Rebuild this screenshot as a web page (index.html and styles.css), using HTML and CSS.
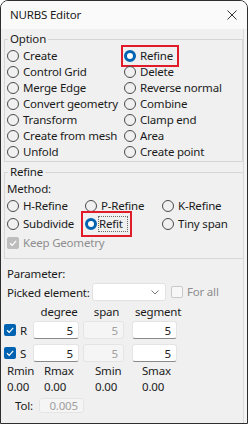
FILE: index.html
```html
<!DOCTYPE html>
<html lang="en">
  <head>
    <meta charset="UTF-8" />
    <meta name="viewport" content="width=device-width, initial-scale=1.0" />
    <title>NURBS Editor</title>
    <link rel="stylesheet" href="styles.css">
  </head>
  <body>
    <div class="window">
      <div class="titlebar">
        <span class="title">NURBS Editor</span>
        <svg class="close" width="10" height="10" viewBox="0 0 10 10">
          <path d="M0.5 0.5 L9.5 9.5 M9.5 0.5 L0.5 9.5" stroke="#333" stroke-width="1" fill="none" />
        </svg>
      </div>

      <div class="content">
        <fieldset class="group option-group">
          <legend>Option</legend>
          <div class="radio-grid">
            <label class="item"><span class="radio"></span>Create</label>
            <label class="item marked"><span class="radio on"></span>Refine</label>
            <label class="item"><span class="radio"></span>Control Grid</label>
            <label class="item"><span class="radio"></span>Delete</label>
            <label class="item"><span class="radio"></span>Merge Edge</label>
            <label class="item"><span class="radio"></span>Reverse normal</label>
            <label class="item"><span class="radio"></span>Convert geometry</label>
            <label class="item"><span class="radio"></span>Combine</label>
            <label class="item"><span class="radio"></span>Transform</label>
            <label class="item"><span class="radio"></span>Clamp end</label>
            <label class="item"><span class="radio"></span>Create from mesh</label>
            <label class="item"><span class="radio"></span>Area</label>
            <label class="item"><span class="radio"></span>Unfold</label>
            <label class="item"><span class="radio"></span>Create point</label>
          </div>
        </fieldset>

        <fieldset class="group refine-group">
          <legend>Refine</legend>
          <div class="line">Method:</div>
          <div class="method-grid">
            <label class="item"><span class="radio"></span>H-Refine</label>
            <label class="item"><span class="radio"></span>P-Refine</label>
            <label class="item"><span class="radio"></span>K-Refine</label>
            <label class="item"><span class="radio"></span>Subdivide</label>
            <label class="item marked refit"><span class="radio on"></span><span class="focus">Refit</span></label>
            <label class="item"><span class="radio"></span>Tiny span</label>
          </div>
          <label class="item disabled keep">
            <span class="check checked-off">
              <svg width="10" height="10" viewBox="0 0 10 10"><path d="M2 5.2 L4.2 7.3 L8.2 2.8" stroke="#fff" stroke-width="1.2" fill="none" /></svg>
            </span>Keep Geometry
          </label>
        </fieldset>

        <div class="params">
          <div class="line">Parameter:</div>
          <div class="picked">
            <span class="picked-label">Picked element:</span>
            <span class="combo">
              <svg width="8" height="5" viewBox="0 0 8 5"><path d="M0.5 0.5 L4 4 L7.5 0.5" stroke="#777" stroke-width="1" fill="none" /></svg>
            </span>
            <label class="item disabled forall"><span class="check empty"></span>For all</label>
          </div>

          <div class="table-head">
            <span class="col-deg">degree</span>
            <span class="col-span">span</span>
            <span class="col-seg">segment</span>
          </div>
          <div class="table-row">
            <label class="row-label">
              <span class="check checked">
                <svg width="10" height="10" viewBox="0 0 10 10"><path d="M2 5.2 L4.2 7.3 L8.2 2.8" stroke="#fff" stroke-width="1.2" fill="none" /></svg>
              </span>R
            </label>
            <span class="field col-deg">5</span>
            <span class="field off col-span">5</span>
            <span class="field col-seg">5</span>
          </div>
          <div class="table-row">
            <label class="row-label">
              <span class="check checked">
                <svg width="10" height="10" viewBox="0 0 10 10"><path d="M2 5.2 L4.2 7.3 L8.2 2.8" stroke="#fff" stroke-width="1.2" fill="none" /></svg>
              </span>S
            </label>
            <span class="field col-deg">5</span>
            <span class="field off col-span">5</span>
            <span class="field col-seg">5</span>
          </div>

          <div class="range first">
            <span>Rmin</span><span>Rmax</span><span>Smin</span><span>Smax</span>
          </div>
          <div class="range">
            <span>0.00</span><span>0.00</span><span>0.00</span><span>0.00</span>
          </div>

          <div class="tol">
            <span>Tol:</span>
            <span class="field off tol-field">0.005</span>
          </div>
        </div>
      </div>
    </div>
  </body>
</html>
```

FILE: styles.css
```css
* {
  box-sizing: border-box;
  margin: 0;
  padding: 0;
}

body {
  width: 248px;
  height: 424px;
  font-family: "Noto Sans", "Open Sans", sans-serif;
  font-size: 11.5px;
  letter-spacing: -0.2px;
  color: #1b1b1b;
  background-color: #fff;
  overflow: hidden;
}

.window {
  width: 248px;
  height: 424px;
  border: 1px solid #2e2e2e;
  border-radius: 8px 8px 0 0;
  background-color: #f3f3f3;
  display: flex;
  flex-direction: column;
  overflow: hidden;
}

.titlebar {
  height: 28px;
  flex: none;
  display: flex;
  align-items: center;
  justify-content: space-between;
  padding: 0 9px 0 9px;
  background-color: #fafafa;
}

.title {
  line-height: 16px;
}

.close {
  margin-right: 1px;
}

.content {
  flex: 1;
  width: 243px;
  background-color: #f0f0f0;
  border-right: 1px solid #d9d9d9;
  padding-left: 3px;
}

.group {
  border: 1px solid #d6d6d6;
  padding: 1px 0 0 2px;
}

.group legend {
  margin-left: 1px;
  padding: 0 2px;
  line-height: 16px;
}

.option-group {
  margin-top: 2px;
  padding-bottom: 1px;
}

.refine-group {
  margin-top: 2px;
  padding-bottom: 7px;
  border-right-color: transparent;
}

.line {
  height: 16px;
  line-height: 16px;
}

.item {
  display: inline-flex;
  align-items: center;
  height: 16px;
  line-height: 16px;
  white-space: nowrap;
}

.radio {
  width: 12px;
  height: 12px;
  border: 1px solid #4a4a4a;
  border-radius: 50%;
  margin-right: 4px;
  flex: none;
}

.radio.on {
  border: 3.5px solid #0063b1;
  background-color: #fff;
}

.radio-grid {
  display: grid;
  grid-template-columns: 117px 1fr;
}

.marked {
  outline: 2px solid #e21b2b;
  outline-offset: 1px;
  justify-self: start;
}

.option-group .marked {
  padding-right: 3px;
}

.method-grid {
  display: grid;
  grid-template-columns: 78px 77px 1fr;
}

.method-grid .item {
  height: 18px;
}

.refit {
  outline-offset: 2px;
}

.refit .radio {
  margin-right: 1px;
}

.focus {
  border: 1px dotted #6a6a6a;
  padding: 0 4px 0 0;
  line-height: 14px;
}

.disabled {
  color: #8e8e8e;
}

.keep {
  margin-top: 1px;
  height: 17px;
}

.check {
  width: 12px;
  height: 12px;
  border-radius: 2px;
  margin-right: 4px;
  display: inline-flex;
  align-items: center;
  justify-content: center;
  flex: none;
}

.check.checked {
  background-color: #0063b1;
}

.check.checked-off {
  background-color: #bdbdbd;
}

.check.empty {
  border: 1px solid #c9c9c9;
  background-color: #f7f7f7;
}

.params {
  padding: 7px 0 0 3px;
}

.picked {
  display: flex;
  align-items: center;
  height: 18px;
  margin-top: 1px;
}

.picked-label {
  width: 85px;
}

.combo {
  width: 74px;
  height: 18px;
  background-color: #fff;
  border: 1px solid #e2e2e2;
  border-radius: 3px;
  display: flex;
  align-items: center;
  justify-content: flex-end;
  padding-right: 6px;
}

.forall {
  margin-left: 5px;
}

.table-head,
.table-row {
  display: flex;
  align-items: center;
}

.table-head {
  height: 16px;
  margin-top: 2px;
  padding-left: 29px;
}

.table-head span {
  text-align: center;
}

.table-row {
  height: 18px;
  margin-top: 2px;
}

.table-row + .table-row {
  margin-top: 5px;
}

.row-label {
  width: 29px;
  display: inline-flex;
  align-items: center;
  margin-left: -3px;
}

.col-deg {
  width: 46px;
}

.col-span {
  width: 41px;
  margin-left: 4px;
}

.col-seg {
  width: 45px;
  margin-left: 8px;
}

.field {
  height: 18px;
  line-height: 17px;
  text-align: right;
  padding-right: 5px;
  background-color: #fff;
  border: 1px solid #e4e4e4;
  border-bottom-color: #8a8a8a;
  border-radius: 3px;
}

.field.off {
  background-color: #f5f5f5;
  border-bottom-color: #e4e4e4;
  color: #a0a0a0;
}

.range {
  display: grid;
  grid-template-columns: 37px 51px 47px 1fr;
  height: 16px;
  line-height: 16px;
}

.range.first {
  margin-top: 1px;
}

.tol {
  display: flex;
  align-items: center;
  height: 17px;
  margin-top: 2px;
  padding-left: 8px;
}

.tol-field {
  width: 45px;
  height: 15px;
  line-height: 14px;
  margin-left: 6px;
}
```
